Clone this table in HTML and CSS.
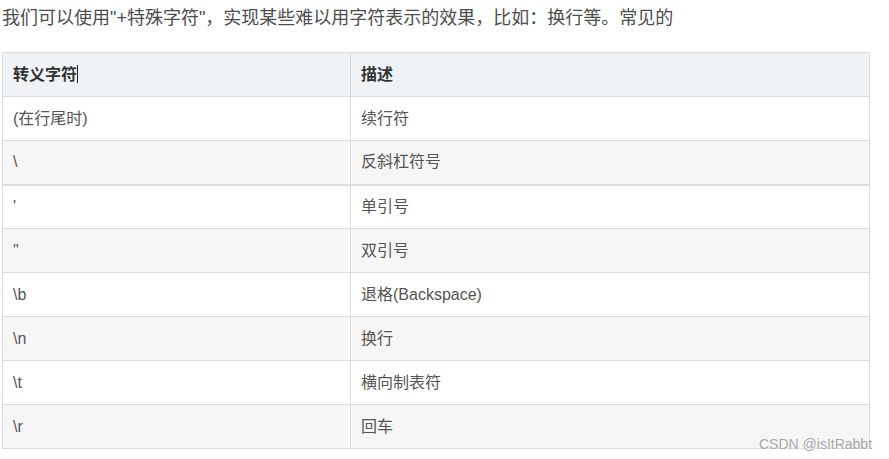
FILE: index.html
```html
<!DOCTYPE html>
<html lang="zh">
<head>
<meta charset="utf-8">
<link rel="stylesheet" href="styles.css">
</head>
<body>
<p class="intro">我们可以使用"+特殊字符"，实现某些难以用字符表示的效果，比如：换行等。常见的</p>
<table class="esc">
  <thead>
    <tr><th class="c1">转义字符<span class="caret"></span></th><th>描述</th></tr>
  </thead>
  <tbody>
    <tr><td>(在行尾时)</td><td>续行符</td></tr>
    <tr><td>\</td><td>反斜杠符号</td></tr>
    <tr class="thick"><td>'</td><td>单引号</td></tr>
    <tr><td>"</td><td>双引号</td></tr>
    <tr><td>\b</td><td>退格(Backspace)</td></tr>
    <tr><td>\n</td><td>换行</td></tr>
    <tr><td>\t</td><td>横向制表符</td></tr>
    <tr><td>\r</td><td>回车</td></tr>
  </tbody>
</table>
<div class="mark">CSDN @isItRabbt</div>
</body>
</html>
```
FILE: styles.css
```css
html, body {
  margin: 0;
  padding: 0;
  background: #fff;
}
body {
  position: relative;
  width: 889px;
  height: 459px;
  overflow: hidden;
  font-family: "Liberation Sans", "Noto Sans CJK SC", sans-serif;
  color: #4d4d4d;
}
.intro {
  margin: 0;
  padding: 5px 0 0 2px;
  font-size: 18px;
  line-height: 26px;
  color: #4d4d4d;
}
.esc {
  margin: 21px 0 0 2px;
  width: 868px;
  border-collapse: collapse;
  font-size: 16px;
  table-layout: fixed;
}
.esc th, .esc td {
  border: 1px solid #dddddd;
  height: 44px;
  padding: 0 10px;
  text-align: left;
  vertical-align: middle;
  line-height: 22px;
  box-sizing: border-box;
}
.esc th {
  background: #eff3f5;
  color: #333;
  font-weight: bold;
}
.esc .c1 {
  width: 348px;
}
.esc tbody td {
  color: #555;
}
.esc tbody tr:nth-child(even) td {
  background: #f6f6f6;
}
.esc tr.thick td {
  border-top: 2px solid #dddddd;
}
.caret {
  display: inline-block;
  width: 1px;
  height: 18px;
  background: #222;
  vertical-align: -3px;
}
.mark {
  position: absolute;
  left: 759px;
  top: 436px;
  font-family: "Liberation Sans", sans-serif;
  font-size: 14px;
  color: #a6a6a6;
  text-shadow: 0 0 2px #fff;
}
```
